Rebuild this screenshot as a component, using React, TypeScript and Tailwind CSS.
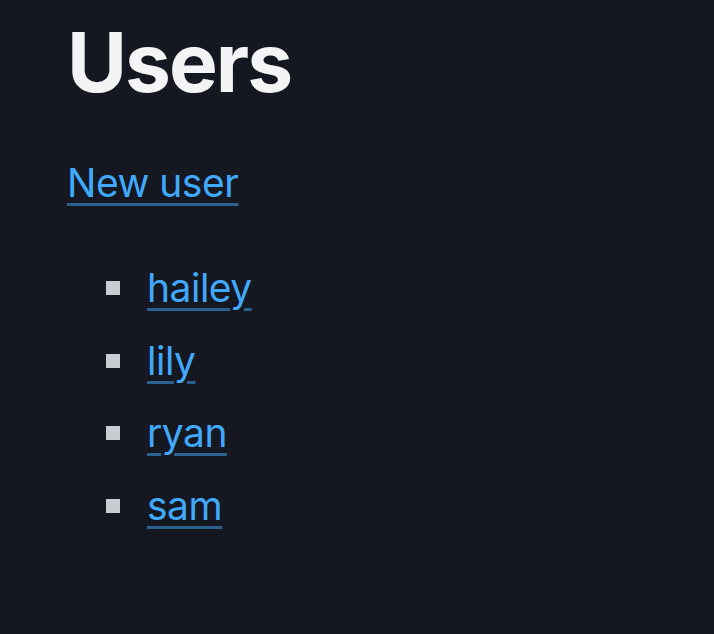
import React from 'react';

const users = ['hailey', 'lily', 'ryan', 'sam'];

const linkClass =
  'text-[#41a9fb] underline decoration-[#41a9fb]/50 decoration-[3px] underline-offset-[6px]';

export default function App() {
  return (
    <div className="min-h-[634px] bg-[#151820] px-[67px] pt-[13px] font-['Inter',sans-serif] text-[#f3f4f6]">
      <h1 className="text-[82px] font-bold leading-[100px] tracking-[-2px]">Users</h1>

      <div className="mt-[46px] text-[39px] leading-[48px] tracking-[-0.5px]">
        <a href="#" className={linkClass}>New user</a>
      </div>

      <ul className="mt-[57px] pl-[39px] text-[39px] leading-[48px] tracking-[-0.5px]">
        {users.map((u) => (
          <li key={u} className="mb-[24.7px] flex items-center gap-[27px]">
            <span className="h-[14px] w-[14px] shrink-0 bg-[#c9ccd3]" />
            <a href="#" className={linkClass}>{u}</a>
          </li>
        ))}
      </ul>
    </div>
  );
}
